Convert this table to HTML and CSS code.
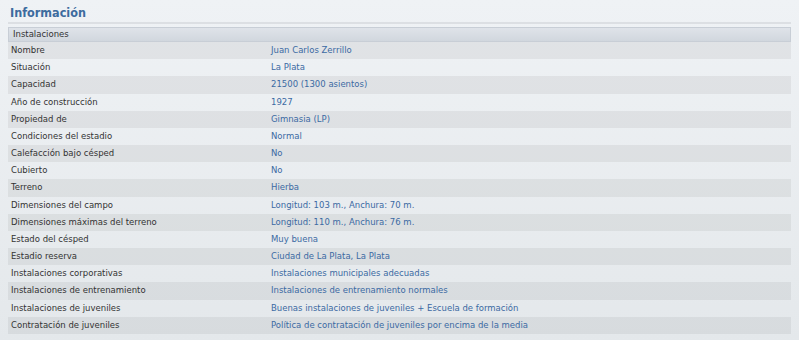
FILE: index.html
```html
<!DOCTYPE html>
<html lang="es">
<head>
<meta charset="utf-8">
<title>Información</title>
<link rel="stylesheet" href="styles.css">
</head>
<body>
<h2 class="title">Información</h2>
<div class="panel">
  <div class="head">Instalaciones</div>
  <div class="row"><span class="lbl">Nombre</span><span class="val">Juan Carlos Zerrillo</span></div>
  <div class="row"><span class="lbl">Situación</span><span class="val">La Plata</span></div>
  <div class="row"><span class="lbl">Capacidad</span><span class="val">21500 (1300 asientos)</span></div>
  <div class="row"><span class="lbl">Año de construcción</span><span class="val">1927</span></div>
  <div class="row"><span class="lbl">Propiedad de</span><span class="val">Gimnasia (LP)</span></div>
  <div class="row"><span class="lbl">Condiciones del estadio</span><span class="val">Normal</span></div>
  <div class="row"><span class="lbl">Calefacción bajo césped</span><span class="val">No</span></div>
  <div class="row"><span class="lbl">Cubierto</span><span class="val">No</span></div>
  <div class="row"><span class="lbl">Terreno</span><span class="val">Hierba</span></div>
  <div class="row"><span class="lbl">Dimensiones del campo</span><span class="val">Longitud: 103 m., Anchura: 70 m.</span></div>
  <div class="row"><span class="lbl">Dimensiones máximas del terreno</span><span class="val">Longitud: 110 m., Anchura: 76 m.</span></div>
  <div class="row"><span class="lbl">Estado del césped</span><span class="val">Muy buena</span></div>
  <div class="row"><span class="lbl">Estadio reserva</span><span class="val">Ciudad de La Plata, La Plata</span></div>
  <div class="row"><span class="lbl">Instalaciones corporativas</span><span class="val">Instalaciones municipales adecuadas</span></div>
  <div class="row"><span class="lbl">Instalaciones de entrenamiento</span><span class="val">Instalaciones de entrenamiento normales</span></div>
  <div class="row"><span class="lbl">Instalaciones de juveniles</span><span class="val">Buenas instalaciones de juveniles + Escuela de formación</span></div>
  <div class="row"><span class="lbl">Contratación de juveniles</span><span class="val">Política de contratación de juveniles por encima de la media</span></div>
</div>
</body>
</html>
```
FILE: styles.css
```css
html, body {
  margin: 0;
  padding: 0;
}
body {
  padding: 0 8px;
  min-height: 340px;
  background: linear-gradient(to bottom, #eff2f5 0%, #e4e8eb 100%);
  font-family: "DejaVu Sans", Verdana, sans-serif;
  font-size: 8.5px;
  color: #333;
}
.title {
  margin: 0;
  padding: 4px 0 0 2px;
  height: 18px;
  font-family: "DejaVu Sans Condensed", "DejaVu Sans", sans-serif;
  font-stretch: condensed;
  font-size: 12.5px;
  font-weight: bold;
  line-height: 17px;
  color: #3d6b9e;
  border-bottom: 2px solid #dcdfe3;
}
.panel {
  margin-top: 3px;
}
.head {
  height: 13px;
  line-height: 13px;
  padding-left: 4px;
  background: linear-gradient(to bottom, #dfe3e9 0%, #d1d7de 100%);
  border: 1px solid #c8ced6;
  color: #333;
}
.row {
  display: flex;
  height: 17.18px;
  line-height: 17px;
  align-items: center;
}
.row:nth-child(even) {
  background: rgba(0, 0, 0, 0.055);
}
.lbl {
  width: 260px;
  padding-left: 3px;
}
.val {
  color: #3b6aa3;
}
```
